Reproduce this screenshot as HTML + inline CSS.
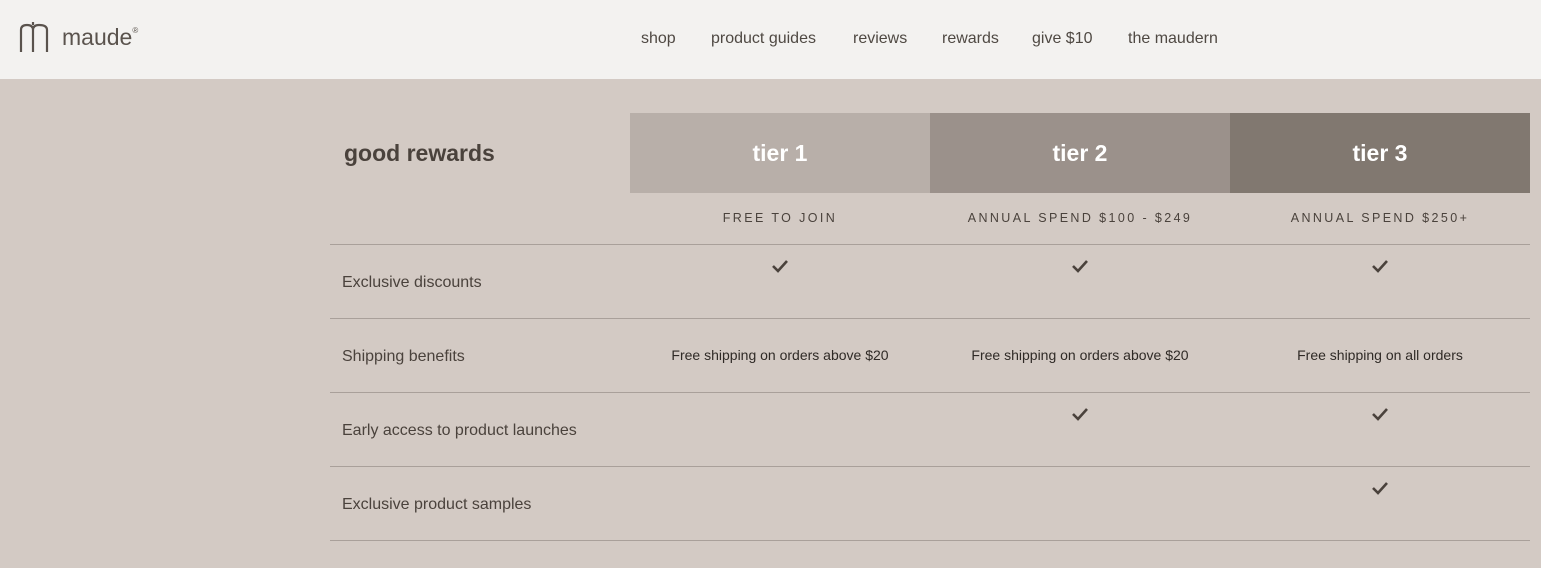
<!DOCTYPE html>
<html><head><meta charset="utf-8"><style>
*{margin:0;padding:0;box-sizing:border-box}
body{width:1541px;height:568px;overflow:hidden;background:#d3cac4;font-family:"Liberation Sans",sans-serif;color:#4a423c;position:relative}
.hd{position:absolute;left:0;top:0;width:1541px;height:79px;background:#f3f2f0}
.nav{position:absolute;top:30px;font-size:16px;color:#4f4943}
.abs{position:absolute}
.tier{position:absolute;top:113px;height:80px;width:300px;color:#fff;font-size:23px;font-weight:bold;text-align:center;line-height:80px}
.sub{position:absolute;top:211px;width:300px;text-align:center;font-size:12.5px;letter-spacing:2.4px;color:#4a423c}
.line{position:absolute;left:330px;width:1200px;height:1px;background:#a9a09a}
.lbl{position:absolute;left:342px;font-size:16px;color:#4a423c}
.ck{position:absolute;width:18px;height:14px}
.sh{position:absolute;width:300px;text-align:center;font-size:14px;color:#2f2a26;top:347px}
</style></head><body>
<div class="hd">
<svg class="abs" style="left:19px;top:21px" width="32" height="32" viewBox="0 0 32 32" fill="none" stroke="#5a534d" stroke-width="2.2"><path d="M2 31V9Q2 4 8 4Q14 4 14 9V31M14 9Q14 4 20 4Q28 4 28 9V31"/><path d="M14 1V4"/></svg>
<div class="abs" style="left:62px;top:24px;font-size:23px;color:#5a534d">maude<sup style="font-size:8px;vertical-align:12px">®</sup></div>
<div class="nav" style="left:641px">shop</div>
<div class="nav" style="left:711px">product guides</div>
<div class="nav" style="left:853px">reviews</div>
<div class="nav" style="left:942px">rewards</div>
<div class="nav" style="left:1032px">give $10</div>
<div class="nav" style="left:1128px">the maudern</div>
</div>
<div class="abs" style="left:344px;top:140px;font-size:23px;font-weight:bold;color:#4a423c">good rewards</div>
<div class="tier" style="left:630px;background:#b8afa9">tier 1</div>
<div class="tier" style="left:930px;background:#9b918b">tier 2</div>
<div class="tier" style="left:1230px;background:#817870">tier 3</div>
<div class="sub" style="left:630px">FREE TO JOIN</div>
<div class="sub" style="left:930px">ANNUAL SPEND $100 - $249</div>
<div class="sub" style="left:1230px">ANNUAL SPEND $250+</div>
<div class="line" style="top:244px"></div>
<div class="line" style="top:318px"></div>
<div class="line" style="top:392px"></div>
<div class="line" style="top:466px"></div>
<div class="line" style="top:540px"></div>
<div class="lbl" style="top:274px">Exclusive discounts</div>
<div class="lbl" style="top:348px">Shipping benefits</div>
<div class="lbl" style="top:422px">Early access to product launches</div>
<div class="lbl" style="top:496px">Exclusive product samples</div>
<div class="sh" style="left:630px">Free shipping on orders above $20</div>
<div class="sh" style="left:930px">Free shipping on orders above $20</div>
<div class="sh" style="left:1230px">Free shipping on all orders</div>
<svg class="ck" style="left:771px;top:259px" viewBox="0 0 18 14"><path d="M2 7L7 12L16 2" fill="none" stroke="#4a423c" stroke-width="2.6"/></svg>
<svg class="ck" style="left:1071px;top:259px" viewBox="0 0 18 14"><path d="M2 7L7 12L16 2" fill="none" stroke="#4a423c" stroke-width="2.6"/></svg>
<svg class="ck" style="left:1371px;top:259px" viewBox="0 0 18 14"><path d="M2 7L7 12L16 2" fill="none" stroke="#4a423c" stroke-width="2.6"/></svg>
<svg class="ck" style="left:1071px;top:407px" viewBox="0 0 18 14"><path d="M2 7L7 12L16 2" fill="none" stroke="#4a423c" stroke-width="2.6"/></svg>
<svg class="ck" style="left:1371px;top:407px" viewBox="0 0 18 14"><path d="M2 7L7 12L16 2" fill="none" stroke="#4a423c" stroke-width="2.6"/></svg>
<svg class="ck" style="left:1371px;top:481px" viewBox="0 0 18 14"><path d="M2 7L7 12L16 2" fill="none" stroke="#4a423c" stroke-width="2.6"/></svg>
</body></html>
